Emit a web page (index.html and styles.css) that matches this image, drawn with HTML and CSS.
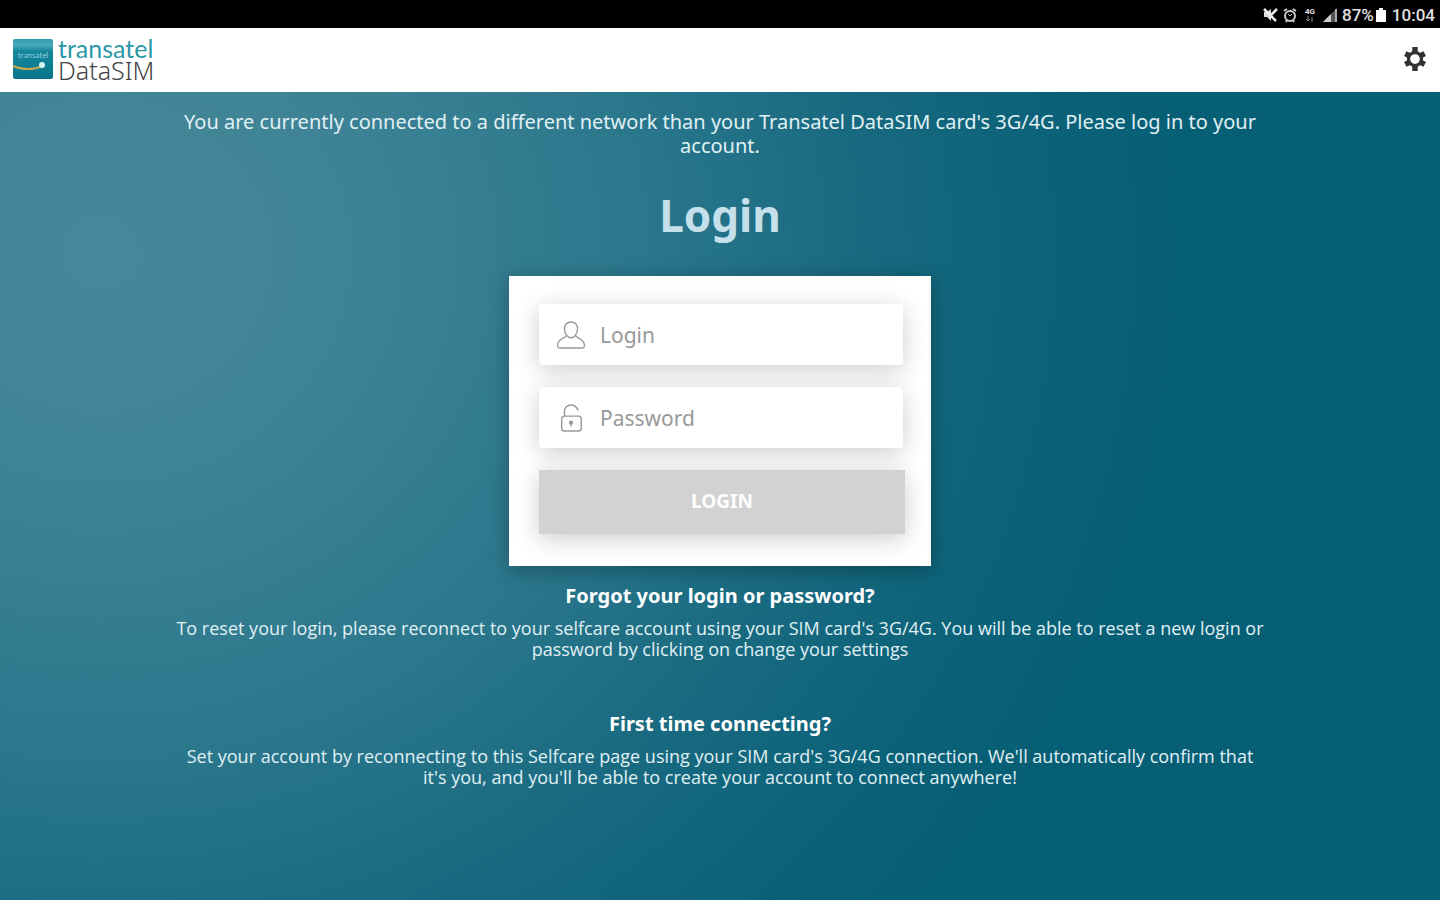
FILE: index.html
```html
<!DOCTYPE html>
<html lang="en">
<head>
  <meta charset="UTF-8">
  <meta name="viewport" content="width=device-width, initial-scale=1">
  <title>Transatel DataSIM</title>
  <link rel="stylesheet" href="styles.css">
</head>
<body>
  <div class="status-bar">
    <svg class="status-icon" viewBox="0 0 16 16" aria-hidden="true">
      <path d="M2 5h3l4-3v12L5 10H2z" fill="#ddd"/>
      <path d="M2 2l12 12M15 2l-7 7" stroke="#eee" stroke-width="2.500"/>
    </svg>
    <svg class="status-icon" viewBox="0 0 16 16" fill="none" stroke="#ccc" aria-hidden="true">
      <circle cx="8" cy="9" r="5" stroke-width="2"/>
      <path d="M2 4l3-2M14 4l-3-2M4 15l1-2M12 15l-1-2" stroke-width="2"/>
      <path d="M6 7l2 2 2-2"/>
    </svg>
    <span class="network">
      <span>4G</span>
      <svg width="10" height="6" viewBox="0 0 10 6" aria-hidden="true">
        <path d="M3 0v5M1 3l2 2 2-2M7 6V1" fill="none" stroke="#888"/>
      </svg>
    </span>
    <svg class="status-icon" viewBox="0 0 16 16" aria-hidden="true">
      <path d="M1 15L15 1v14z" fill="#555"/>
      <path d="M1 15l8-8v8z" fill="#ccc"/>
      <path d="M14 2v13" stroke="#aaa" stroke-width="2"/>
    </svg>
    <span class="battery">87%<svg width="10" height="14" viewBox="0 0 10 14" aria-hidden="true"><path d="M3 0h4v2h3v12H0V2h3z" fill="#fff"/></svg></span>
    <span class="clock">10:04</span>
  </div>

  <header class="header">
    <a href="#" class="logo">
      <svg width="42" height="42" viewBox="0 0 42 42" aria-hidden="true">
        <defs>
          <linearGradient id="tile" x1="0" y1="0" x2="0" y2="1">
            <stop offset="0" stop-color="#2d9aae"/>
            <stop offset=".15" stop-color="#4aabbd"/>
            <stop offset=".3" stop-color="#17869c"/>
            <stop offset="1" stop-color="#08758a"/>
          </linearGradient>
        </defs>
        <rect x="1" y="1" width="40" height="40" rx="2" fill="url(#tile)"/>
        <text x="21" y="20" class="tile-text">transatel</text>
        <path d="M1 28c9 4 21 4 29 0" fill="none" stroke="#c9a94f" stroke-width="2"/>
        <circle cx="30" cy="27" r="3" fill="#d8f2f2"/>
      </svg>
      <span class="logo-text">
        <span class="logo-brand">transatel</span>
        <span class="logo-product">DataSIM</span>
      </span>
    </a>
    <button type="button" class="settings" aria-label="Settings">
      <svg width="26" height="26" viewBox="0 0 24 24" fill="none" stroke="#333" aria-hidden="true">
        <circle cx="12" cy="12" r="6" stroke-width="3"/>
        <path d="M12 1v5M12 18v5M3 7l4 2M17 15l4 2M3 17l4-2M17 9l4-2" stroke-width="5"/>
      </svg>
    </button>
  </header>

  <main class="main">
    <p class="intro">You are currently connected to a different network than your Transatel DataSIM card's 3G/4G. Please log in to your account.</p>

    <h1 class="title">Login</h1>

    <form class="card">
      <label class="field">
        <svg width="28" height="28" viewBox="0 0 30 30" fill="none" stroke="#999" stroke-width="1.5" aria-hidden="true">
          <path d="M15 1c-4 0-7 3-7 7 0 5 3 10 7 10s7-5 7-10c0-4-3-7-7-7z"/>
          <path d="M10 16c-1 2-8 3-9 8-1 3 0 5 2 5h24c2 0 3-2 2-5-1-5-8-6-9-8"/>
        </svg>
        <input type="text" name="login" placeholder="Login" aria-label="Login">
      </label>
      <label class="field">
        <svg width="28" height="28" viewBox="0 0 30 30" fill="none" stroke="#999" stroke-width="1.5" aria-hidden="true">
          <rect x="5" y="13" width="21" height="16" rx="3"/>
          <path d="M8 13V8c0-4 3-7 7-7 4 0 6 2 8 6"/>
          <circle cx="15" cy="20" r="1.500" fill="#999"/>
          <path d="M15 20v4"/>
        </svg>
        <input type="password" name="password" placeholder="Password" aria-label="Password">
      </label>
      <button type="submit" class="submit">LOGIN</button>
    </form>

    <section class="help">
      <h2>Forgot your login or password?</h2>
      <p>To reset your login, please reconnect to your selfcare account using your SIM card's 3G/4G. You will be able to reset a new login or password by clicking on change your settings</p>
    </section>

    <section class="help">
      <h2>First time connecting?</h2>
      <p>Set your account by reconnecting to this Selfcare page using your SIM card's 3G/4G connection. We'll automatically confirm that it's you, and you'll be able to create your account to connect anywhere!</p>
    </section>
  </main>
</body>
</html>
```

FILE: styles.css
```css
* {
  box-sizing: border-box;
}

body {
  margin: 0;
  min-height: 100vh;
  display: flex;
  flex-direction: column;
  font-family: "Noto Sans", "Open Sans", sans-serif;
  color: #e0f0f4;
}

.status-bar {
  height: 28px;
  padding: 2px 5px 0 0;
  display: flex;
  align-items: center;
  justify-content: flex-end;
  gap: 4px;
  background: #000;
  color: #e0e0e0;
  font-family: Roboto, sans-serif;
  font-size: 17px;
  font-weight: 500;
}

.status-icon {
  width: 16px;
  height: 16px;
}

.network {
  display: flex;
  flex-direction: column;
  align-items: center;
  width: 16px;
  font-size: 8px;
  line-height: 8px;
  font-weight: bold;
}

.battery {
  display: flex;
  align-items: center;
  gap: 2px;
}

.clock {
  margin-left: 2px;
}

.header {
  height: 64px;
  padding: 0 12px 2px;
  display: flex;
  align-items: center;
  justify-content: space-between;
  background: #fff;
}

.logo {
  display: flex;
  align-items: center;
  gap: 4px;
  text-decoration: none;
}

.tile-text {
  font-family: Lato, sans-serif;
  font-size: 8px;
  fill: #8fd0da;
  text-anchor: middle;
}

.logo-text {
  display: flex;
  flex-direction: column;
  line-height: 22px;
}

.logo-brand {
  font-family: Lato, sans-serif;
  font-size: 25px;
  color: #2b98a8;
}

.logo-product {
  font-family: "Noto Sans", sans-serif;
  font-size: 25px;
  font-weight: 300;
  color: #444;
}

.settings {
  display: flex;
  padding: 0;
  border: none;
  background: none;
  cursor: pointer;
}

.main {
  flex: 1;
  display: flex;
  flex-direction: column;
  align-items: center;
  padding: 18px 12% 24px;
  text-align: center;
  background: radial-gradient(ellipse 1080px 1000px at 7% 20%, #468899 0%, #3f8496 22%, #2b778c 50%, #17697f 72%, #0a6178 90%, #075f76 100%);
}

.intro {
  margin: 0;
  font-size: 20px;
  line-height: 24px;
}

.title {
  margin: 27px 0 31px;
  font-size: 44px;
  line-height: 60px;
  color: #c5e0ea;
}

.card {
  width: 422px;
  max-width: 100%;
  padding: 28px 26px 32px 30px;
  display: flex;
  flex-direction: column;
  gap: 22px;
  background: #fff;
  box-shadow: 0 4px 20px rgba(0, 0, 0, 0.3);
}

.field {
  display: flex;
  align-items: center;
  gap: 15px;
  height: 61px;
  margin-right: 2px;
  padding: 0 18px;
  border-radius: 4px;
  background: #fff;
  box-shadow: 0 5px 24px rgba(0, 0, 0, 0.2);
}

.field input {
  flex: 1;
  min-width: 0;
  padding: 0;
  border: none;
  outline: none;
  background: none;
  font: inherit;
  font-size: 21px;
  color: #555;
}

.field input::placeholder {
  color: #999;
}

.submit {
  height: 64px;
  padding: 0 0 2px;
  border: none;
  background: #d2d2d2;
  box-shadow: 0 5px 24px rgba(0, 0, 0, 0.2);
  font: inherit;
  font-size: 19px;
  font-weight: bold;
  color: #fff;
}

.help {
  margin-top: 16px;
}

.help + .help {
  margin-top: 50px;
}

.help h2 {
  margin: 0 0 8px;
  font-size: 20px;
  line-height: 28px;
  color: #fff;
}

.help p {
  margin: 0;
  font-family: "Open Sans", sans-serif;
  font-size: 18px;
  line-height: 21px;
}
```
